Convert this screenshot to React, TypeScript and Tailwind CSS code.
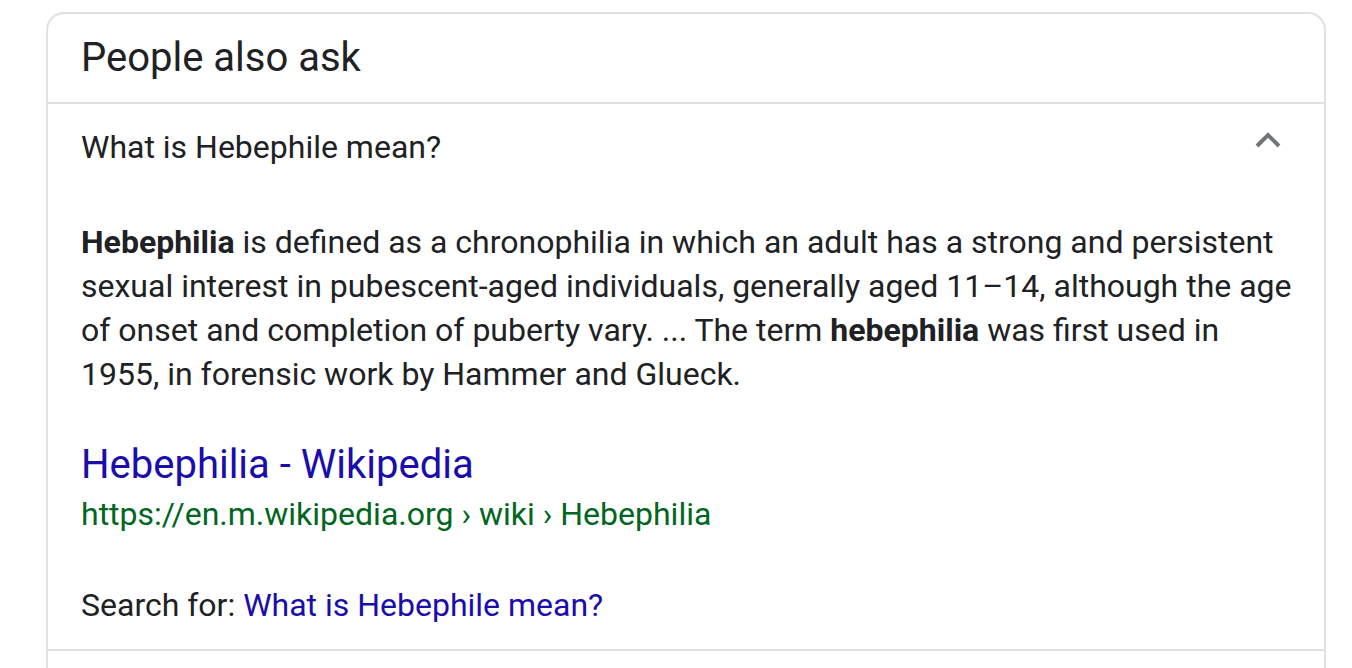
import React from 'react';

export default function App() {
  return (
    <div className="min-h-screen bg-white pt-[12px] pl-[46px]" style={{ fontFamily: 'Roboto, Arial, sans-serif' }}>
      <div className="w-[1280px] border-2 border-[#dfe1e5] rounded-t-[18px] border-b-0 text-[#202124]">
        <div className="h-[90px] flex items-center px-[33px] border-b-2 border-[#dfe1e5]">
          <h2 className="text-[40px] leading-none">People also ask</h2>
        </div>

        <div className="border-b-2 border-[#dfe1e5]">
          <div className="flex items-center justify-between pl-[33px] pr-[42px] pt-[23px] pb-[20px]">
            <span className="text-[32px] leading-[40px]">What is Hebephile mean?</span>
            <svg width="28" height="18" viewBox="0 0 28 18" className="mt-[-14px]">
              <path d="M3 15 L14 4 L25 15" fill="none" stroke="#70757a" strokeWidth="4" />
            </svg>
          </div>

          <div className="pl-[33px] pr-[20px] pt-[33px]">
            <p className="text-[32px] leading-[44px]">
              <b>Hebephilia</b> is defined as a chronophilia in which an adult has a strong and persistent
              <br />
              sexual interest in pubescent-aged individuals, generally aged 11–14, although the age
              <br />
              of onset and completion of puberty vary. ... The term <b>hebephilia</b> was first used in
              <br />
              1955, in forensic work by Hammer and Glueck.
            </p>

            <div className="mt-[44px]">
              <a className="block text-[40px] leading-[50px] text-[#1a0dab]">Hebephilia - Wikipedia</a>
              <div className="text-[32px] leading-[48px] text-[#006621]">
                https://en.m.wikipedia.org › wiki › Hebephilia
              </div>
            </div>

            <div className="pt-[45px] pb-[22px] text-[32px] leading-[44px]">
              Search for: <a className="text-[#1a0dab]">What is Hebephile mean?</a>
            </div>
          </div>
        </div>
        <div className="h-[40px]" />
      </div>
    </div>
  );
}
